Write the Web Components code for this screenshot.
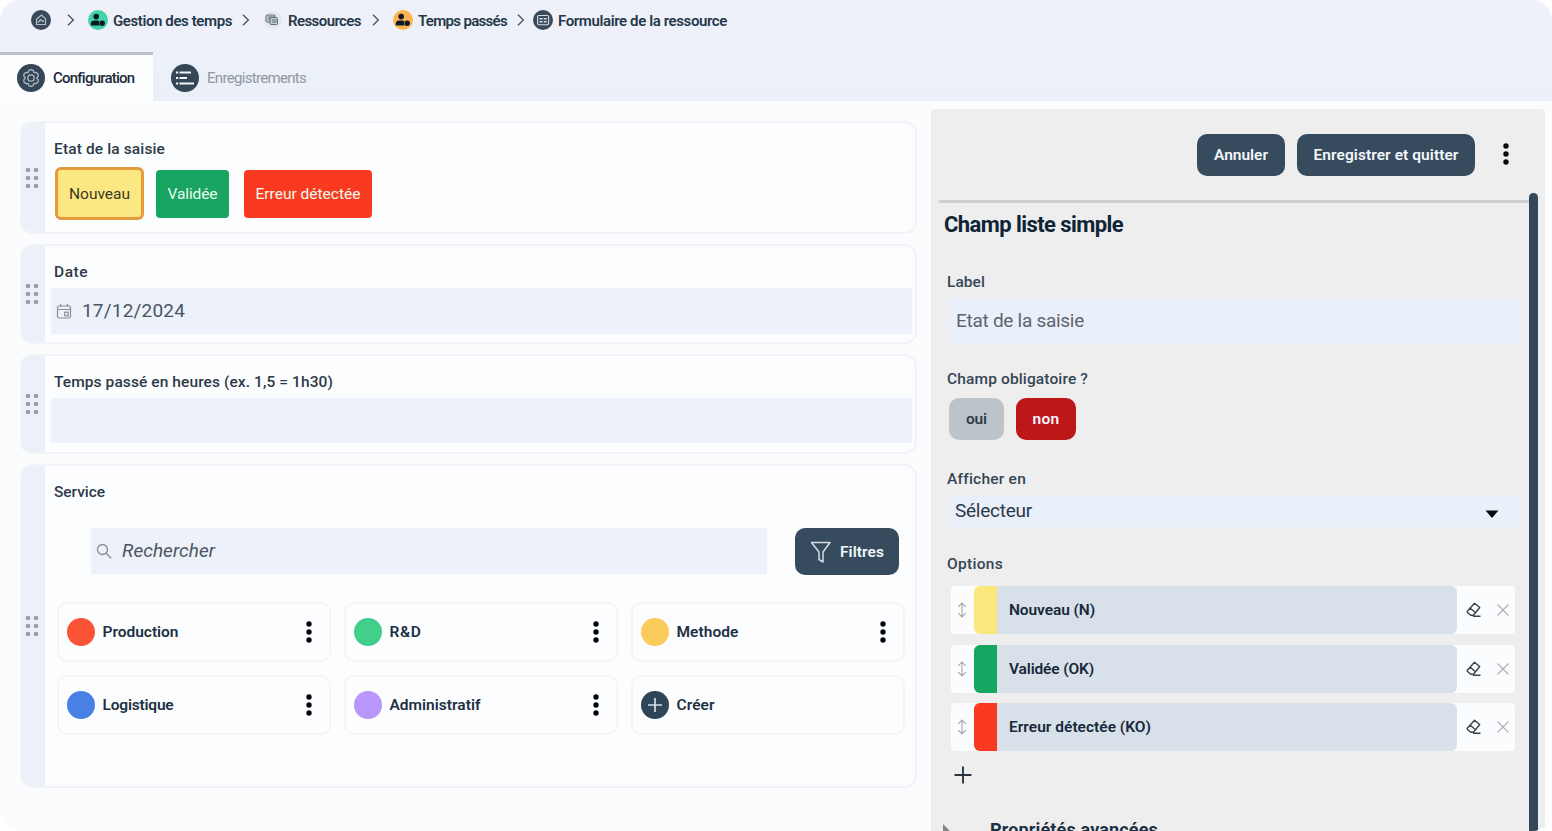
<!DOCTYPE html>
<html lang="fr"><head><meta charset="utf-8"><title>Formulaire de la ressource</title>
<style>html,body{margin:0;background:#fff;overflow:hidden}body{font-family:Roboto,"Noto Sans",sans-serif;color:#1d3144}</style>
</head><body><form-app></form-app>
<script>
const ctx = document.createElement('canvas').getContext('2d');
const define = (name, css, html) => customElements.define(name, class extends HTMLElement {
  constructor() {
    super();
    this.attachShadow({mode: 'open'}).innerHTML = `<style>*{box-sizing:border-box}:host{box-sizing:border-box}${css}</style>${html}`;
  }
});

// One line of text whose tracking is adjusted to a given width.
customElements.define('fit-text', class extends HTMLElement {
  constructor() {
    super();
    this.attachShadow({mode: 'open'}).innerHTML = '<style>:host{display:block;white-space:nowrap;flex:none;line-height:22px}</style><slot></slot>';
  }
  connectedCallback() {
    const s = this.getAttribute('s') || 15.5, b = this.getAttribute('b') || 500, w = +this.getAttribute('w');
    const it = this.hasAttribute('i') ? 'italic' : 'normal';
    const t = this.textContent;
    this.style.font = `${it} ${b} ${s}px/22px Roboto, "Noto Sans", sans-serif`;
    ctx.font = `${it} ${b} ${s}px Roboto, "Noto Sans", sans-serif`;
    this.style.letterSpacing = ((w - ctx.measureText(t).width) / t.length).toFixed(3) + 'px';
    this.style.width = w + 'px';
  }
});

const user = '<g fill="#0b1a24"><circle cx="8.2" cy="6.6" r="2.8"/><path d="M2.8 15.500v-1.700q0-3.400 3.600-3.400h3q1.400 0 2 .8-1.400 2.200.2 4.300z"/><circle cx="14.200" cy="13.300" r="2.700"/></g>';
const icons = {
  home: [20, '<circle cx="10" cy="10" r="10" fill="#3b4a5a"/><path d="M5.500 9.300 10.500 5l4 3.800v5.700h-9zM7 12.500l2.500-3 2.200 2 1.200-1" fill="none" stroke="#b5bec8" stroke-width="1.200"/>'],
  green: [20, '<circle cx="10" cy="10" r="10" fill="#44d3a2"/>' + user],
  orange: [20, '<circle cx="10" cy="10" r="10" fill="#fbb450"/>' + user],
  res: [18, '<circle cx="9" cy="9" r="9" fill="#e3e7ee"/><g stroke="#65717f" fill="#c4cad2"><rect x="2" y="4" width="9" height="7" rx="1"/><rect x="6" y="6.500" width="7.500" height="7" rx="1"/></g><path d="M4 6h6M4 8h3M8 9h4.500M8 11h4.500" stroke="#65717f"/>'],
  form: [20, '<circle cx="10" cy="10" r="10" fill="#3b4a5a"/><rect x="4.600" y="5.500" width="11" height="9.200" rx="1.200" fill="#3b4a5a" stroke="#d6dce3" stroke-width="1.100"/><path d="M6.500 8.700h3m1.200 0h3m-7.200 3h3m1.200 0h3" stroke="#d6dce3" stroke-width="1.400"/>'],
  gear: [28, '<circle cx="14" cy="14" r="14" fill="#354656"/><g fill="none" stroke="#aebac5" stroke-width="1.300" stroke-linejoin="round"><path d="m11.800 6.400 2.200-.8 2.200.8.7 2.200 2.300-.2 1.800 1.500.2 2.300-1.500 1.800 1.500 1.800-.2 2.300-1.800 1.500-2.300-.2-.7 2.200-2.200.8-2.200-.8-.7-2.200-2.300.2L7 18.100l-.2-2.300L8.300 14l-1.500-1.800L7 9.900l1.800-1.500 2.300.2z"/><circle cx="14" cy="14" r="3.200"/></g>'],
  list: [28, '<circle cx="14" cy="14" r="14" fill="#354656"/><path d="M8.500 8.500H20M8.500 14H16M8.500 19.500H23" stroke="#f2f5f8" stroke-width="2"/><path d="M5 8.500h2.200m-2.200 5.500h2.200m-2.200 5.500h2.200" stroke="#f2f5f8" stroke-width="2"/>'],
  chev: [12, '<path d="m3 .8 5.300 5.200L3 11.200" fill="none" stroke="#4c5865" stroke-width="1.400"/>'],
  cal: [16, '<g fill="none" stroke="#8a8f96" stroke-width="1.200"><rect x="1.500" y="3" width="13" height="12" rx="1.500"/><path d="M1.500 6.500h13M4.700.8v3M11.300.8v3"/><rect x="8.800" y="9.200" width="3.400" height="3.600"/></g>'],
  search: [16, '<g fill="none" stroke="#858c95" stroke-width="1.300"><circle cx="6.500" cy="6.500" r="5"/><path d="m10.200 10.200 5 5"/></g>'],
  funnel: [22, '<path d="M1.500 1.500h18.500l-7 9.500v10l-4-2.500V11z" fill="none" stroke="#d5dee7" stroke-width="1.500" stroke-linejoin="round"/>'],
  dots: [24, '<g fill="#05090d"><circle cx="12" cy="4" r="2.700"/><circle cx="12" cy="12" r="2.700"/><circle cx="12" cy="20" r="2.700"/></g>'],
  create: [28, '<circle cx="14" cy="14" r="14" fill="#2f4558"/><path d="M7 14h14M14 7v14" stroke="#d5dde4" stroke-width="1.700"/>'],
  grip: [24, '<g fill="#9a9ea7"><circle cx="8" cy="4" r="2.300"/><circle cx="16" cy="4" r="2.300"/><circle cx="8" cy="12" r="2.300"/><circle cx="16" cy="12" r="2.300"/><circle cx="8" cy="20" r="2.300"/><circle cx="16" cy="20" r="2.300"/></g>'],
  caret: [14, '<path d="M.5 3.500h13L7 11z" fill="#05090d"/>'],
  move: [16, '<path d="M8 1v14M4.200 4.800 8 1l3.800 3.800M4.200 11.200 8 15l3.800-3.800" fill="none" stroke="#a2a7ad" stroke-width="1.100"/>'],
  erase: [16, '<g fill="none" stroke="#39434c" stroke-width="1.400" stroke-linejoin="round"><path d="M1.300 9.300 8.500 1.200l5.200 4.300-6.200 7.700H4.700L1.300 10.200zM4.300 6.200l5.200 4.600M7 14.300h7.500"/></g>'],
  close: [14, '<path d="m1.500 1.500 11 11m0-11-11 11" stroke="#b0b4b9" stroke-width="1.300"/>'],
  plus: [18, '<path d="M.5 9h17M9 .5v17" stroke="#2b3542" stroke-width="1.900"/>'],
  tri: [12, '<path d="M1 0 9 8 1 12z" fill="#858585"/>']
};
customElements.define('ui-icon', class extends HTMLElement {
  connectedCallback() {
    if (this.shadowRoot) return;
    const [n, body] = icons[this.getAttribute('n')];
    this.attachShadow({mode: 'open'}).innerHTML = `<style>:host{display:block;width:${n}px;height:${n}px;flex:none}svg{display:block;overflow:visible}</style><svg width="${n}" height="${n}" viewBox="0 0 ${n} ${n}">${body}</svg>`;
  }
});

define('ui-button', ':host{display:flex;align-items:center;justify-content:center;flex:none;background:#364b5e;color:#f4f7fa;border-radius:10px}', '<slot></slot>');

define('bread-crumb', ':host{display:flex;height:52px;padding:0 0 12px 31px;align-items:center;color:#24384a}fit-text{padding-top:1px}', `
  <ui-icon n="home"></ui-icon><ui-icon n="chev" style="margin:0 10px 0 14px"></ui-icon>
  <ui-icon n="green" style="margin:0 5px 0 1px"></ui-icon><fit-text w="119" s="15" b="600">Gestion des temps</fit-text>
  <ui-icon n="chev" style="margin:0 12px 0 8px"></ui-icon><ui-icon n="res"></ui-icon><fit-text w="73" s="15" b="600" style="margin-left:6px">Ressources</fit-text>
  <ui-icon n="chev" style="margin:0 11px 0 9px"></ui-icon><ui-icon n="orange"></ui-icon><fit-text w="89" s="15" b="600" style="margin-left:5px">Temps passés</fit-text>
  <ui-icon n="chev" style="margin:0 6px 0 8px"></ui-icon><ui-icon n="form"></ui-icon><fit-text w="169" s="15" b="600" style="margin-left:5px">Formulaire de la ressource</fit-text>`);

define('tab-bar', ':host{display:flex;height:49px}div{display:flex;align-items:center;padding-left:17px;border-top:3px solid transparent}.a{width:153px;background:#fcfdfe;border-color:#bfc2c8;color:#1d2a38}.b{color:#9197a0;padding-left:18px}fit-text{margin-left:8px}', `
  <div class="a"><ui-icon n="gear"></ui-icon><fit-text w="81" s="15">Configuration</fit-text></div>
  <div class="b"><ui-icon n="list"></ui-icon><fit-text w="99" s="15" b="400">Enregistrements</fit-text></div>`);

define('field-card', `:host{display:flex;border:2px solid #f1f3f6;border-radius:12px;overflow:hidden;background:#fcfdfe}
  .g{width:23px;background:#edf0f8;display:flex;align-items:center;justify-content:center;flex:none;padding-right:3px}
  .m{flex:1;min-width:0;padding:15px 3px 0 6px;color:#2e3a49}`, '<div class="g"><ui-icon n="grip"></ui-icon></div><div class="m"><slot></slot></div>');

define('text-input', ':host{display:flex;align-items:center;background:#edf1f9;height:46px;color:#4b5563}', '<slot></slot>');

define('state-chip', ':host{display:flex;align-items:center;justify-content:center;height:48px;border-radius:4px;color:#eafaf0;flex:none}', '<slot></slot>');

define('service-tile', ':host{display:flex;align-items:center;height:60px;border:2px solid #f3f5f7;border-radius:10px;padding:0 8px 0 8px;color:#1d3144}i{width:28px;height:28px;border-radius:50%;background:var(--c)}ui-icon{margin-left:auto}::slotted(fit-text){margin-left:8px}', '<slot name="icon"><i></i></slot><slot></slot><slot name="menu"><ui-icon n="dots"></ui-icon></slot>');

define('option-row', `:host{display:flex;height:48px;background:#fbfcfd;border-radius:4px;align-items:center;color:#17293a}
  .s{width:23px;height:48px;border-radius:6px 0 0 6px;background:var(--c);margin-left:4px}
  .b{width:460px;height:48px;background:#d8e1ea;border-radius:0 6px 6px 0;display:flex;align-items:center;padding-left:12px}`, `
  <ui-icon n="move" style="margin-left:3px"></ui-icon><div class="s"></div><div class="b"><slot></slot></div>
  <ui-icon n="erase" style="margin-left:9px"></ui-icon><ui-icon n="close" style="margin-left:14px"></ui-icon>`);

define('form-canvas', `:host{display:flex;flex-direction:column;gap:10px;width:917px;padding:20px 0 0 20px;flex:none}
  .chips{display:flex;align-items:center;height:53px;margin:7px 0 0 4px}.l{margin-left:3px}
  .search{display:flex;justify-content:space-between;margin:25px 13px 27px 40px}
  .grid{display:grid;grid-template-columns:repeat(3,274px);gap:13px}`, `
  <field-card style="height:113px"><fit-text class="l" w="111">Etat de la saisie</fit-text>
    <div class="chips">
      <state-chip style="width:89px;height:53px;background:#fce883;border:3px solid #e59a3c;border-radius:6px;color:#3a391f"><fit-text w="61" b="400">Nouveau</fit-text></state-chip>
      <state-chip style="width:73px;background:#17a561;margin-left:12px"><fit-text w="50" b="400">Validée</fit-text></state-chip>
      <state-chip style="width:128px;background:#fa3a20;margin-left:15px"><fit-text w="105" b="400">Erreur détectée</fit-text></state-chip>
    </div></field-card>
  <field-card style="height:100px"><fit-text class="l" w="34">Date</fit-text>
    <text-input style="margin-top:5px;padding-left:5px"><ui-icon n="cal"></ui-icon><fit-text w="103" s="19" b="400" style="margin-left:10px">17/12/2024</fit-text></text-input></field-card>
  <field-card style="height:100px"><fit-text class="l" w="279">Temps passé en heures (ex. 1,5 = 1h30)</fit-text>
    <text-input style="margin-top:5px;height:45px"></text-input></field-card>
  <field-card style="height:324px"><fit-text class="l" w="51">Service</fit-text>
    <div class="search"><text-input style="width:676px;padding-left:5px"><ui-icon n="search"></ui-icon><fit-text i w="93" s="19" b="400" style="margin-left:10px">Rechercher</fit-text></text-input>
      <ui-button style="width:104px;height:47px;gap:8px"><ui-icon n="funnel"></ui-icon><fit-text w="44" b="600">Filtres</fit-text></ui-button></div>
    <div class="grid" style="margin-left:5.500px">
      <service-tile style="--c:#fb5336"><fit-text w="76" b="600">Production</fit-text></service-tile>
      <service-tile style="--c:#42cf8c"><fit-text w="32" b="600">R&amp;D</fit-text></service-tile>
      <service-tile style="--c:#fdcb5c"><fit-text w="62" b="600">Methode</fit-text></service-tile>
      <service-tile style="--c:#4880e6"><fit-text w="71" b="600">Logistique</fit-text></service-tile>
      <service-tile style="--c:#b896fa"><fit-text w="91" b="600">Administratif</fit-text></service-tile>
      <service-tile><ui-icon slot="icon" n="create"></ui-icon><fit-text w="38" b="600">Créer</fit-text><span slot="menu"></span></service-tile>
    </div></field-card>`);

define('property-panel', `:host{display:flex;flex-direction:column;width:614px;height:722px;margin:8px 0 0 14px;background:#eeeeee;border-radius:4px 4px 0 0;position:relative;overflow:hidden;color:#354656;flex:none}
  .bar{display:flex;height:91px;padding:25px 27px 0 0;justify-content:flex-end;align-items:flex-start;flex:none}
  .rule{height:3px;background:#cdcecf;margin:0 16px 0 8px;flex:none}
  .body{padding:11px 25px 0 16px;display:flex;flex-direction:column;align-items:stretch}
  text-input{background:#eaf0f9}.opts{display:flex;flex-direction:column;gap:10.500px;margin:11px 5px 0 4px}
  .scroll{position:absolute;left:598px;top:84px;width:9px;height:640px;border-radius:5px 5px 0 0;background:#35475b}`, `
  <div class="bar"><ui-button style="width:88px;height:42px;margin-right:12px"><fit-text w="54" b="600">Annuler</fit-text></ui-button>
    <ui-button style="width:178px;height:42px;margin-right:19px"><fit-text w="145" b="600">Enregistrer et quitter</fit-text></ui-button><ui-icon n="dots" style="margin-top:8px"></ui-icon></div>
  <div class="rule"></div>
  <div class="body">
    <fit-text w="179" s="22" b="700" style="margin-left:-3px;color:#0f2436">Champ liste simple</fit-text>
    <fit-text w="38" style="margin-top:35px">Label</fit-text>
    <text-input style="margin:5px 0 0 1px;padding-left:8px;color:#5c6570"><fit-text w="128" s="19" b="400">Etat de la saisie</fit-text></text-input>
    <fit-text w="141" style="margin-top:24px">Champ obligatoire ?</fit-text>
    <div style="display:flex;gap:12px;margin:8px 0 0 2px"><ui-button style="width:55px;height:42px;background:#bcc3c9;color:#2f3b48"><fit-text w="21" b="600">oui</fit-text></ui-button>
      <ui-button style="width:60px;height:42px;background:#be171a"><fit-text w="27" b="600">non</fit-text></ui-button></div>
    <fit-text w="78" style="margin-top:28px">Afficher en</fit-text>
    <text-input style="height:32px;margin:5px 0 0 1px;padding:0 21px 0 7px;color:#2b3948;justify-content:space-between"><fit-text w="77" s="19" b="400">Sélecteur</fit-text><ui-icon n="caret" style="margin-top:5px"></ui-icon></text-input>
    <fit-text w="56" style="margin-top:26px">Options</fit-text>
    <div class="opts">
      <option-row style="--c:#fce77c"><fit-text w="86" b="600">Nouveau (N)</fit-text></option-row>
      <option-row style="--c:#15a761"><fit-text w="85" b="600">Validée (OK)</fit-text></option-row>
      <option-row style="--c:#fa3a20"><fit-text w="142" b="600">Erreur détectée (KO)</fit-text></option-row>
    </div>
    <ui-icon n="plus" style="margin:15px 0 0 7px"></ui-icon>
    <div style="display:flex;margin:35px 0 0 -5px;color:#1d3144"><ui-icon n="tri" style="margin-top:5px"></ui-icon><fit-text w="168" s="18" b="700" style="margin-left:36px">Propriétés avancées</fit-text></div>
  </div><div class="scroll"></div>`);

define('form-app', ':host{display:block;width:1552px;height:831px;border-radius:20px;overflow:hidden;background:#fbfcfe}header{height:101px;background:linear-gradient(#eff1f9,#ebf0f8)}main{display:flex;height:730px}', '<header><bread-crumb></bread-crumb><tab-bar></tab-bar></header><main><form-canvas></form-canvas><property-panel></property-panel></main>');
</script></body></html>
